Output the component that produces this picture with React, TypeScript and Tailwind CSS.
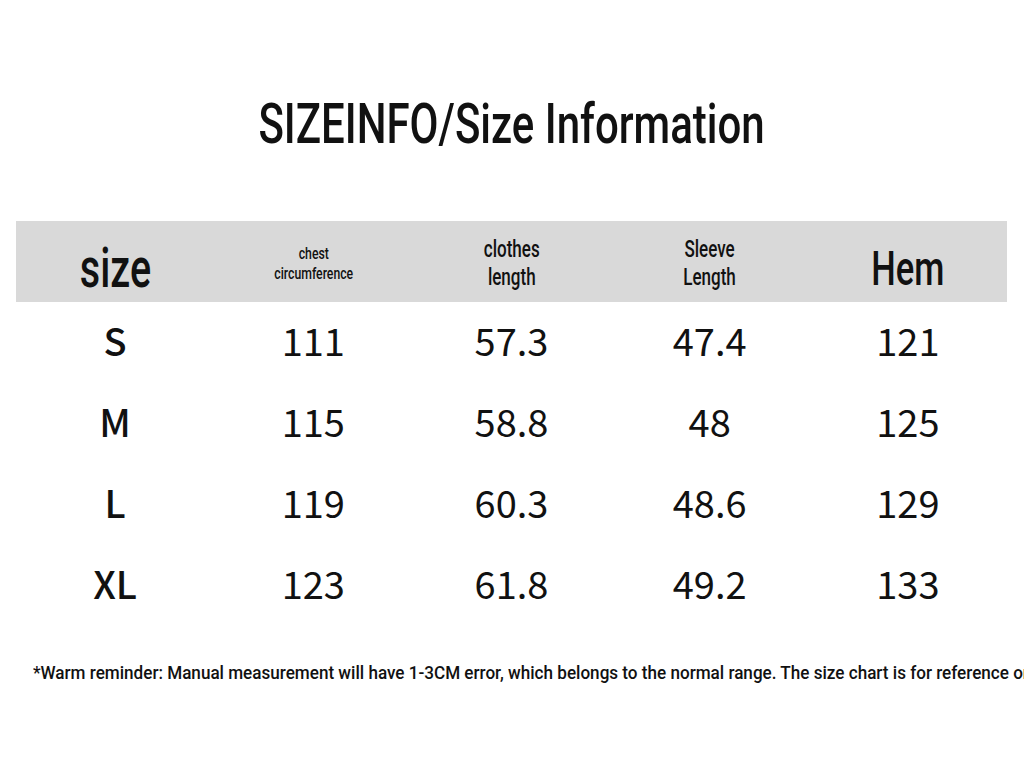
const cond = { fontFamily: "Roboto, 'Liberation Sans', sans-serif" };
const cjk = { fontFamily: "'Noto Sans CJK SC', 'Noto Sans', sans-serif" };

const rows = [
  ["S", "111", "57.3", "47.4", "121"],
  ["M", "115", "58.8", "48", "125"],
  ["L", "119", "60.3", "48.6", "129"],
  ["XL", "123", "61.8", "49.2", "133"],
];

export default function App() {
  return (
    <div className="w-[1024px] h-[768px] overflow-hidden bg-white text-[#111]" style={cond}>
      <div className="h-[221px] flex flex-col items-center pt-[80px]">
        <h1 className="text-[56px] leading-[88px] font-medium whitespace-nowrap scale-x-[0.75]">
          SIZEINFO/Size Information
        </h1>
      </div>

      <div className="ml-[16px] w-[991px] h-[81px] bg-[#d9d9d9] grid grid-cols-5 items-center">
        <div className="text-center pt-[14px]">
          <span className="inline-block text-[55px] leading-none font-medium scale-x-[0.72]">size</span>
        </div>
        <div className="text-center pt-[6px]">
          <span className="inline-block text-[17px] leading-[20px] font-medium scale-x-[0.72] whitespace-nowrap">
            chest
            <br />
            circumference
          </span>
        </div>
        <div className="text-center pt-[4px]">
          <span className="inline-block text-[23px] leading-[28px] font-medium scale-x-[0.74]">
            clothes
            <br />
            length
          </span>
        </div>
        <div className="text-center pt-[4px]">
          <span className="inline-block text-[23px] leading-[28px] font-medium scale-x-[0.74]">
            Sleeve
            <br />
            Length
          </span>
        </div>
        <div className="text-center pt-[14px]">
          <span className="inline-block text-[48px] leading-none font-medium scale-x-[0.72]">Hem</span>
        </div>
      </div>

      <div className="ml-[16px] w-[991px]">
        {rows.map((r) => (
          <div key={r[0]} className="grid grid-cols-5 h-[81px] items-center pb-[6px]" style={cjk}>
            <div className="text-center text-[38px] font-medium">{r[0]}</div>
            {r.slice(1).map((v, i) => (
              <div key={i} className="text-center text-[38px] font-normal">
                {v}
              </div>
            ))}
          </div>
        ))}
      </div>

      <p className="mt-[37px] ml-[33px] whitespace-nowrap text-[19px] leading-none font-medium scale-x-[0.9] origin-left">
        *Warm reminder: Manual measurement will have 1-3CM error, which belongs to the normal range. The size chart is for reference only.
      </p>
    </div>
  );
}
